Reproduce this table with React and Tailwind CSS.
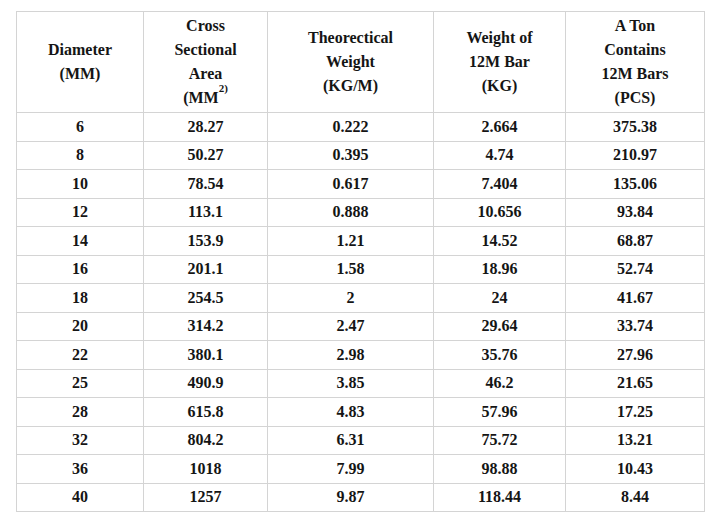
const rows = [
    ['6', '28.27', '0.222', '2.664', '375.38'],
    ['8', '50.27', '0.395', '4.74', '210.97'],
    ['10', '78.54', '0.617', '7.404', '135.06'],
    ['12', '113.1', '0.888', '10.656', '93.84'],
    ['14', '153.9', '1.21', '14.52', '68.87'],
    ['16', '201.1', '1.58', '18.96', '52.74'],
    ['18', '254.5', '2', '24', '41.67'],
    ['20', '314.2', '2.47', '29.64', '33.74'],
    ['22', '380.1', '2.98', '35.76', '27.96'],
    ['25', '490.9', '3.85', '46.2', '21.65'],
    ['28', '615.8', '4.83', '57.96', '17.25'],
    ['32', '804.2', '6.31', '75.72', '13.21'],
    ['36', '1018', '7.99', '98.88', '10.43'],
    ['40', '1257', '9.87', '118.44', '8.44'],
];

const th = "border border-[#d4d4d4] text-center align-middle font-bold leading-[24px] px-1";
const td = "border border-[#d4d4d4] text-center align-middle font-bold h-[28.5px] p-0";

const App = () => {
    return (
        <div className="w-[724px] h-[520px] bg-white pt-[11px] pl-[16px] text-[#151515] text-[16px] font-['Liberation_Serif']">
            <table className="border-collapse table-fixed w-[688px]">
                <colgroup>
                    <col className="w-[127px]" />
                    <col className="w-[124px]" />
                    <col className="w-[166px]" />
                    <col className="w-[132px]" />
                    <col className="w-[139px]" />
                </colgroup>
                <thead>
                    <tr className="h-[101px]">
                        <th className={th}>Diameter<br />(MM)</th>
                        <th className={th}>Cross<br />Sectional<br />Area<br />(MM<sup className="text-[11px] align-[6px]">2)</sup></th>
                        <th className={th}>Theorectical<br />Weight<br />(KG/M)</th>
                        <th className={th}>Weight of<br />12M Bar<br />(KG)</th>
                        <th className={th}>A Ton<br />Contains<br />12M Bars<br />(PCS)</th>
                    </tr>
                </thead>
                <tbody>
                    { rows.map((r, i) => (
                        <tr key={i}>
                            { r.map((c, j) => <td key={j} className={td}>{ c }</td>) }
                        </tr>
                    )) }
                </tbody>
            </table>
        </div>
    )
}

export default App;
